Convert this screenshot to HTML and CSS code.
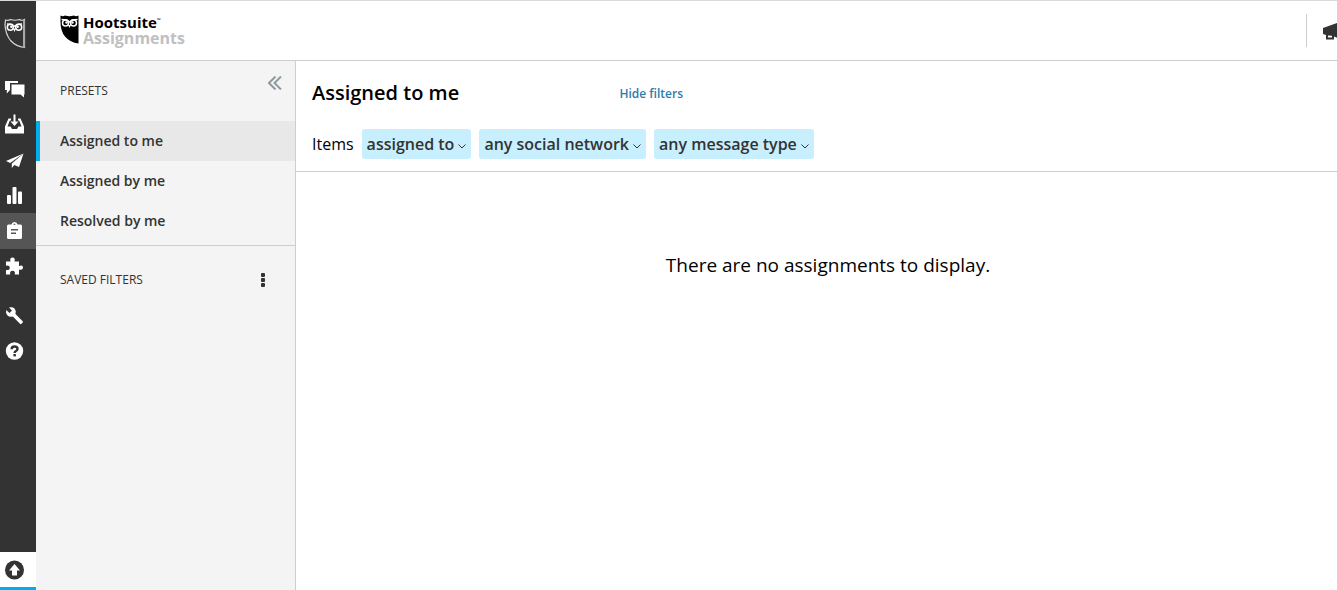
FILE: index.html
```
<!DOCTYPE html>
<html lang="en">

<head>
    <meta charset="UTF-8">
    <meta name="viewport" content="width=device-width, initial-scale=1">
    <title>Hootsuite Assignments</title>
    <link rel="stylesheet" href="styles.css">
</head>

<body>

    <!-- left icon rail -->
    <nav class="rail" aria-label="Main">
        <a href="#" class="rail-logo" aria-label="Home">
            <svg width="22" height="31" viewBox="0 0 22 31">
                <path d="M1.500 2Q4 3 6.500 1.500Q11 3 15.500 1.500Q18 3 20.500 1.500V29.500Q12 28.500 6.500 22.500Q1.500 16 1 7Z" fill="none" stroke="#d6d6d6" stroke-width="1.200" />
                <path d="M20 2V29.500" stroke="#aaa6ad" stroke-width="2" />
                <path d="M3 6L8 6.500L10.500 8.500L13 6.500L18 6" fill="none" stroke="#fff" stroke-width="1.300" />
                <circle cx="6.300" cy="9.300" r="3" fill="none" stroke="#fff" stroke-width="1.500" />
                <circle cx="14.700" cy="9.300" r="3" fill="none" stroke="#fff" stroke-width="1.500" />
                <circle cx="7.300" cy="8.800" r="1.200" fill="#fff" />
                <circle cx="13.700" cy="8.800" r="1.200" fill="#fff" />
                <path d="M9 10.500H12L10.500 14Z" fill="#fff" />
            </svg>
        </a>
        <ul class="rail-list">
            <li><a href="#" aria-label="Streams">
                <svg viewBox="0 0 20 20">
                    <path d="M0 2H13V4H5V11L1.800 14.500V11H0Z" />
                    <path d="M6.500 5.500H19.500V15.500H19V18.500L15.500 15.500H6.500Z" />
                </svg>
            </a></li>
            <li><a href="#" aria-label="Inbox">
                <svg viewBox="0 0 20 20">
                    <path d="M8.500 0.500H10.500V7.500H13.500L9.500 12L5.500 7.500H8.500Z" />
                    <path d="M3.500 4.500H6V6.500H4.800L2.500 12.500H5.500L7 15H12L13.500 12.500H16.500L14.200 6.500H13V4.500H15.500L19 12.500V19.500H0V12.500Z" />
                </svg>
            </a></li>
            <li><a href="#" aria-label="Publisher">
                <svg viewBox="0 0 20 20">
                    <path d="M18.500 3.500L1 11L5.200 13Z" />
                    <path d="M18.500 3.500L6.800 13.500V18L9.300 15L14 17Z" />
                </svg>
            </a></li>
            <li><a href="#" aria-label="Analytics">
                <svg viewBox="0 0 20 20">
                    <rect x="2" y="10" width="4" height="9" rx="1" />
                    <rect x="7.500" y="2" width="4" height="17" rx="1" />
                    <rect x="13" y="6.500" width="4" height="12.500" rx="1" />
                </svg>
            </a></li>
            <li class="active"><a href="#" aria-label="Assignments">
                <svg viewBox="0 0 20 20">
                    <path fill-rule="evenodd" d="M3.500 3.500H6.500Q7 1.300 9.500 1Q12 1.300 12.500 3.500H15.500Q17 3.500 17 5V16.500Q17 18 15.500 18H3.500Q2 18 2 16.500V5Q2 3.500 3.500 3.500ZM8.700 2.700V4H10.300V2.700ZM6 8V9.500H13V8ZM6 11.500V13H11V11.500Z" />
                </svg>
            </a></li>
            <li><a href="#" aria-label="App directory">
                <svg viewBox="0 0 20 20">
                    <path d="M1 5.500H5.500Q4.500 1.500 7.500 1.500Q10.500 1.500 9.500 5.500H14V10Q18 8.500 18 11.500Q18 14.500 14 13.500V18.500H9.800Q10.500 14.800 7.500 14.800Q4.500 14.800 5.200 18.500H1V14Q4.800 14.500 4.800 11.800Q4.800 9 1 9.700Z" />
                </svg>
            </a></li>
        </ul>
        <ul class="rail-list rail-tools">
            <li><a href="#" aria-label="Tools">
                <svg viewBox="0 0 20 20">
                    <path d="M1.300 4L4.500 7L7 4.500L4 1.500Q7.500 0.500 9.500 2.500Q11.500 4.800 10.500 8L17.700 15.200Q18.300 16 17.500 16.800L16.500 17.800Q15.700 18.500 15 17.800L7.800 10.500Q4.500 11.500 2.300 9.300Q0.300 7 1.300 4Z" />
                </svg>
            </a></li>
            <li><a href="#" aria-label="Help">
                <svg viewBox="0 0 20 20">
                    <circle cx="9.500" cy="10" r="8.700" />
                    <path d="M6.600 8.200Q6.600 5.500 9.500 5.500Q12.500 5.500 12.500 8Q12.500 9.300 11 10Q9.600 10.700 9.600 12" fill="none" stroke="#323332" stroke-width="2.400" />
                    <rect x="8.400" y="13" width="2.500" height="2.400" fill="#323332" />
                </svg>
            </a></li>
        </ul>
        <a href="#" class="rail-upgrade" aria-label="Upgrade">
            <svg viewBox="0 0 20 20">
                <circle cx="9.500" cy="10" r="9.500" />
                <path d="M9.500 4L15 10.500H12V15.500H7V10.500H4Z" fill="#fff" />
            </svg>
        </a>
    </nav>

    <div class="page">
        <header class="topbar">
            <svg class="owl" width="19" height="29" viewBox="0 0 19 29">
                <path d="M0.500 0.500Q3 1.800 5 0.500Q9.500 2 14 0.500Q16 1.800 18.500 0.500V28.500Q10 27.500 5 21.500Q0.500 16 0.500 7Z" />
                <path d="M1.500 4.500L7 5L9.500 7L12 5L17.500 4.500" fill="none" stroke="#fff" stroke-width="1.300" />
                <circle cx="5.500" cy="8" r="3" fill="none" stroke="#fff" stroke-width="1.500" />
                <circle cx="13.500" cy="8" r="3" fill="none" stroke="#fff" stroke-width="1.500" />
                <circle cx="6.500" cy="7.500" r="1.200" fill="#fff" />
                <circle cx="12.500" cy="7.500" r="1.200" fill="#fff" />
                <path d="M8 10H11L9.500 13Z" fill="#fff" />
            </svg>
            <div class="brand">
                <div class="brand-name">Hootsuite<sup>™</sup></div>
                <div class="brand-product">Assignments</div>
            </div>
            <button class="announce" aria-label="Announcements">
                <svg width="20" height="20" viewBox="0 0 20 20">
                    <path d="M0 7L17 1V18L11 15.500V18.500H3V14L0 13ZM5 14.500V16.500H9V14.700Z" fill-rule="evenodd" />
                </svg>
            </button>
        </header>

        <div class="content">
            <aside class="sidebar">
                <section class="presets">
                    <div class="side-head">
                        <h2>PRESETS</h2>
                        <button class="collapse" aria-label="Collapse sidebar">
                            <svg width="14" height="14" viewBox="0 0 14 14">
                                <path d="M7.500 0.500L1 7L7.500 13.500M13 0.500L6.500 7L13 13.500" />
                            </svg>
                        </button>
                    </div>
                    <ul class="preset-list">
                        <li class="active"><a href="#">Assigned to me</a></li>
                        <li><a href="#">Assigned by me</a></li>
                        <li><a href="#">Resolved by me</a></li>
                    </ul>
                </section>
                <section class="saved">
                    <h2>SAVED FILTERS</h2>
                    <button class="more" aria-label="Saved filter options">
                        <svg width="4" height="14" viewBox="0 0 4 14">
                            <rect width="4" height="4" rx="1" />
                            <rect y="5" width="4" height="4" rx="1" />
                            <rect y="10" width="4" height="4" rx="1" />
                        </svg>
                    </button>
                </section>
            </aside>

            <main class="main">
                <div class="filters">
                    <div class="title-row">
                        <h1>Assigned to me</h1>
                        <a href="#">Hide filters</a>
                    </div>
                    <div class="filter-row">
                        <span>Items</span>
                        <button class="pill">assigned to<svg width="8" height="5" viewBox="0 0 8 5"><path d="M0.500 0.500L4 4L7.500 0.500" /></svg></button>
                        <button class="pill">any social network<svg width="8" height="5" viewBox="0 0 8 5"><path d="M0.500 0.500L4 4L7.500 0.500" /></svg></button>
                        <button class="pill">any message type<svg width="8" height="5" viewBox="0 0 8 5"><path d="M0.500 0.500L4 4L7.500 0.500" /></svg></button>
                    </div>
                </div>
                <p class="empty">There are no assignments to display.</p>
            </main>
        </div>
    </div>

</body>

</html>
```
FILE: styles.css
```
* {
    box-sizing: border-box;
}

body {
    margin: 0;
    min-height: 100vh;
    display: flex;
    border-top: 1px solid #d9dade;
    font-family: "Open Sans", "Noto Sans", sans-serif;
    color: #000;
    background: #fff;
}

ul,
h1,
h2,
p {
    margin: 0;
    padding: 0;
    list-style: none;
}

a {
    text-decoration: none;
}

button {
    padding: 0;
    border: 0;
    background: none;
    font-family: inherit;
    cursor: pointer;
}

svg {
    display: block;
}

/* icon rail */
.rail {
    width: 36px;
    flex-shrink: 0;
    display: flex;
    flex-direction: column;
    background: #323332;
}

.rail-logo {
    height: 70px;
    padding: 17px 0 0 4px;
}

.rail-list {
    height: 213px;
    display: flex;
    flex-direction: column;
}

.rail-tools {
    height: 71px;
    margin-top: 14px;
}

.rail-list li {
    flex: 1;
}

.rail-list a {
    height: 100%;
    padding-left: 5px;
    display: flex;
    align-items: center;
}

.rail-list svg {
    width: 20px;
    height: 20px;
    fill: #fff;
}

.rail-list .active {
    background: #555;
}

.rail-upgrade {
    height: 38px;
    margin-top: auto;
    padding-left: 5px;
    display: flex;
    align-items: center;
    background: #fff;
    border-bottom: 3px solid #00adef;
}

.rail-upgrade svg {
    width: 20px;
    height: 20px;
    fill: #323332;
}

/* header */
.page {
    flex: 1;
    min-width: 0;
    display: flex;
    flex-direction: column;
}

.topbar {
    height: 60px;
    padding: 0 0 2px 24px;
    display: flex;
    align-items: center;
    border-bottom: 1px solid #cecece;
    overflow: hidden;
}

.brand {
    margin-left: 4px;
    font-size: 16px;
    font-weight: 700;
    line-height: 16px;
}

.brand-name {
    font-size: 15px;
}

.brand-name sup {
    font-size: 5px;
    line-height: 1;
    vertical-align: 6px;
}

.brand-product {
    color: #bfc0c1;
}

.announce {
    height: 33px;
    width: 31px;
    margin: 2px 0 0 auto;
    padding-left: 16px;
    border-left: 1px solid #cecece;
}

.announce svg {
    fill: #323332;
}

/* sidebar */
.content {
    flex: 1;
    display: flex;
}

.sidebar {
    width: 260px;
    flex-shrink: 0;
    background: #f4f4f4;
    border-right: 1px solid #cecece;
    color: #323332;
}

.sidebar h2 {
    font-size: 12px;
    font-weight: 400;
    line-height: 18px;
}

.presets {
    padding-bottom: 4px;
    border-bottom: 1px solid #cecece;
}

.side-head {
    height: 60px;
    padding: 15px 13px 0 24px;
    display: flex;
    justify-content: space-between;
    align-items: flex-start;
}

.side-head h2 {
    padding-top: 6px;
}

.collapse path {
    fill: none;
    stroke: #8f9a9f;
    stroke-width: 2;
}

.preset-list a {
    height: 40px;
    padding: 0 0 2px 20px;
    display: flex;
    align-items: center;
    border-left: 4px solid transparent;
    font-size: 14px;
    font-weight: 600;
    color: #323332;
}

.preset-list .active a {
    background: #e8e8e8;
    border-color: #00adef;
}

.saved {
    padding: 25px 30px 0 24px;
    display: flex;
    justify-content: space-between;
    align-items: center;
}

.more svg {
    fill: #323332;
}

/* main column */
.main {
    flex: 1;
    min-width: 0;
}

.filters {
    padding: 16px 16px 12px;
    border-bottom: 1px solid #cecece;
}

.title-row {
    max-width: 371px;
    display: flex;
    justify-content: space-between;
    align-items: center;
}

h1 {
    font-size: 20px;
    font-weight: 600;
    line-height: 32px;
}

.title-row a {
    font-size: 12px;
    font-weight: 600;
    color: #2b7cab;
}

.filter-row {
    margin-top: 20px;
    display: flex;
    align-items: center;
    gap: 8px;
    font-size: 16px;
}

.pill {
    height: 30px;
    padding: 0 5px;
    display: flex;
    align-items: center;
    gap: 4px;
    border-radius: 3px;
    background: #c8effd;
    color: #323332;
    font-size: 16px;
    font-weight: 600;
}

.pill svg {
    margin-top: 4px;
}

.pill path {
    fill: none;
    stroke: #323332;
}

.empty {
    padding: 77px 16px;
    padding-left: 39px;
    font-size: 19px;
    line-height: 32px;
    text-align: center;
}
```
